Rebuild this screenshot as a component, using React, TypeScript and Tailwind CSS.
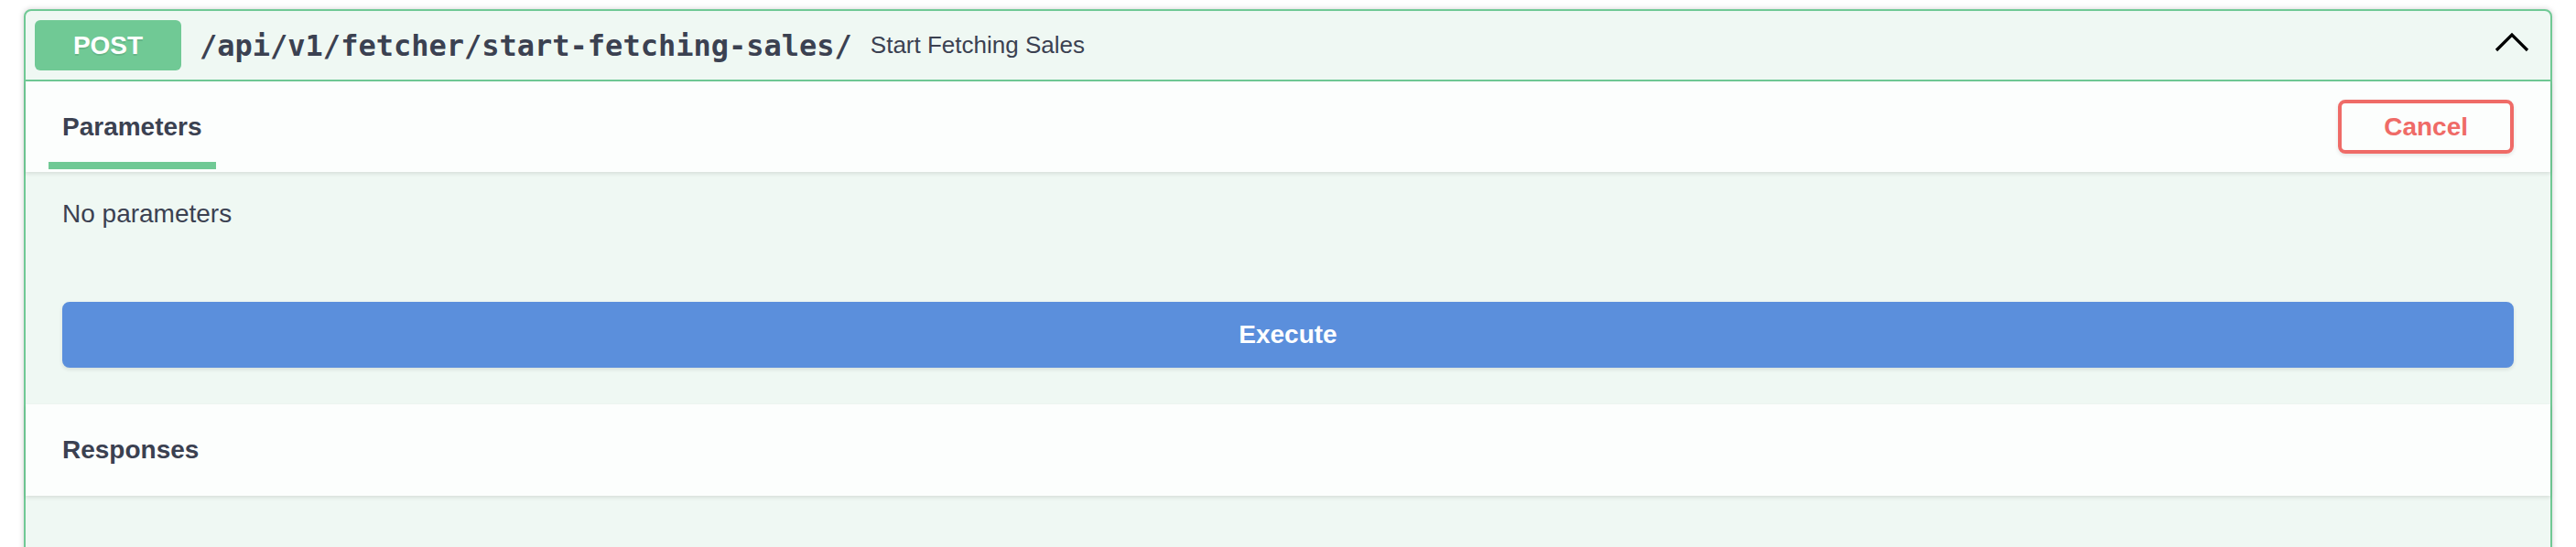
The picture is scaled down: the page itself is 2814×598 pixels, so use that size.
import { useState } from "react";

const sans = "font-['Liberation_Sans','Helvetica','Arial',sans-serif]";

function ChevronUp() {
  return (
    <svg width="40" height="40" viewBox="0 0 40 40" className="mr-[12px] flex-shrink-0">
      <polyline points="3,25 20,8 37,25" fill="none" stroke="#000" strokeWidth="3.2" />
    </svg>
  );
}

export default function App() {
  const [open, setOpen] = useState(true);

  return (
    <div className={`min-h-[598px] bg-white px-[26px] pt-[10px] ${sans}`}>
      <div className="rounded-[8px] border-2 border-[#70c995] bg-[#eff8f3] shadow-[0_0_6px_rgba(0,0,0,0.19)]">
        {/* Summary */}
        <div
          onClick={() => setOpen(!open)}
          className="flex cursor-pointer items-center border-b-2 border-[#70c995] p-[10px]"
        >
          <span className="flex h-[55px] min-w-[160px] items-center justify-center rounded-[6px] bg-[#70c995] text-[28px] font-bold text-white [text-shadow:0_2px_0_rgba(0,0,0,0.1)]">
            POST
          </span>
          <span className="px-[20px] font-['DejaVu_Sans_Mono',monospace] text-[32px] font-bold text-[#3b4151]">
            /api/v1/fetcher/start-fetching-sales/
          </span>
          <span className="text-[26px] text-[#3b4151]">Start Fetching Sales</span>
          <div className="flex-1" />
          <ChevronUp />
        </div>

        {/* Parameters header */}
        <div className="flex min-h-[99px] items-center justify-between bg-white/80 px-[40px] shadow-[0_2px_4px_rgba(0,0,0,0.1)]">
          <div className="relative">
            <h4 className="text-[28px] font-bold text-[#3b4151]">Parameters</h4>
            <div className="absolute -left-[10%] top-[59px] h-[8px] w-[120%] bg-[#70c995]" />
          </div>
          <button className="rounded-[8px] border-4 border-[#ef6b67] bg-transparent px-[46px] py-[8px] text-[28px] font-bold leading-[35px] text-[#ef6b67] shadow-[0_2px_4px_rgba(0,0,0,0.1)]">
            Cancel
          </button>
        </div>

        {/* Body */}
        <div className="mb-[10px] px-[40px] py-[30px]">
          <p className="text-[28px] leading-[32px] text-[#3b4151]">No parameters</p>
        </div>
        <div className="p-[40px]">
          <button className="h-[72px] w-full rounded-[8px] border-4 border-[#5b8fdc] bg-[#5b8fdc] text-[28px] font-bold text-white shadow-[0_2px_4px_rgba(0,0,0,0.1)]">
            Execute
          </button>
        </div>

        {/* Responses header */}
        <div className="flex min-h-[100px] items-center bg-white/80 px-[40px] shadow-[0_2px_4px_rgba(0,0,0,0.1)]">
          <h4 className="text-[28px] font-bold text-[#3b4151]">Responses</h4>
        </div>
        <div className="h-[120px]" />
      </div>
    </div>
  );
}
